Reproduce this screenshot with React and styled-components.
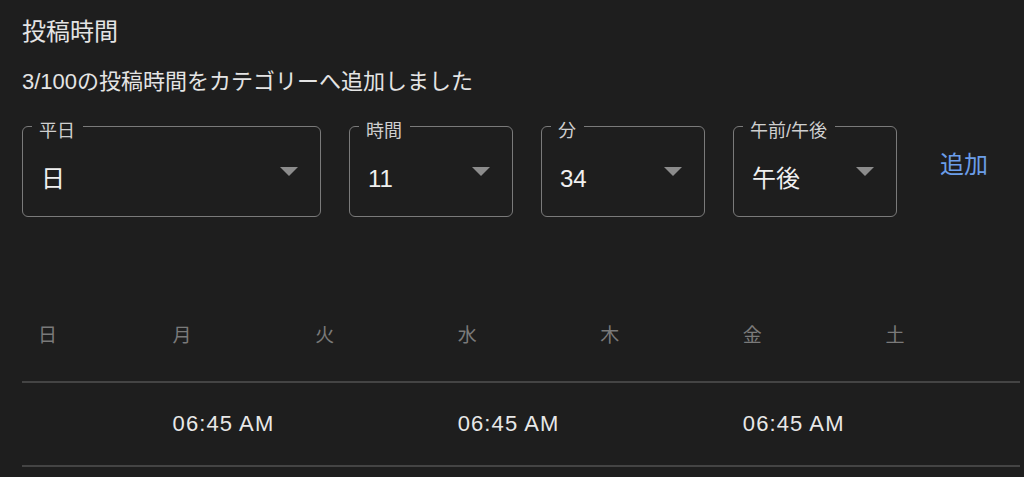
import React from "react";
import styled, { createGlobalStyle } from "styled-components";

const Global = createGlobalStyle`
  html, body {
    margin: 0;
    padding: 0;
    background: #1e1e1e;
  }
  body {
    font-family: "Liberation Sans", "Noto Sans CJK JP", sans-serif;
    color: #e6e6e6;
  }
`;

const Page = styled.div`
  padding: 14px 4px 0 22px;
  min-height: 477px;
  box-sizing: border-box;
  background: #1e1e1e;
`;

const Title = styled.h2`
  margin: 0;
  font-size: 24px;
  line-height: 36px;
  font-weight: 400;
  color: #e4e4e4;
`;

const Subtitle = styled.p`
  margin: 16px 0 0;
  font-size: 22px;
  line-height: 32px;
  font-weight: 400;
  color: #e4e4e4;
`;

const FormRow = styled.div`
  display: flex;
  align-items: flex-start;
  gap: 28px;
  margin-top: 28px;
`;

const SelectBox = styled.div`
  position: relative;
  box-sizing: border-box;
  width: ${(p) => p.$width}px;
  height: 91px;
  border: 1px solid #7a7a7a;
  border-radius: 6px;
  display: flex;
  align-items: flex-start;
  padding: 0 22px 0 18px;
`;

const Label = styled.span`
  position: absolute;
  top: -7px;
  left: 9px;
  padding: 0 8px 0 7px;
  background: #1e1e1e;
  font-size: 18px;
  line-height: 22px;
  color: #cfcfcf;
  white-space: nowrap;
`;

const Value = styled.span`
  flex: 1;
  margin-top: 34px;
  font-size: 24px;
  line-height: 36px;
  color: #f0f0f0;
`;

const Arrow = styled.svg`
  margin-top: 40px;
  flex: none;
`;

const AddButton = styled.button`
  margin: 21px 0 0 3px;
  padding: 0 12px;
  border: none;
  background: transparent;
  font-family: "Liberation Sans", "Noto Sans CJK JP", sans-serif;
  font-size: 24px;
  line-height: 36px;
  color: #6b9de8;
  cursor: pointer;
`;

const Table = styled.table`
  margin-top: 69px;
  width: 998px;
  border-collapse: collapse;
  table-layout: fixed;
`;

const HeadCell = styled.th`
  height: 96px;
  padding: 0 0 0 ${(p) => (p.$first ? 16 : 8)}px;
  text-align: left;
  vertical-align: middle;
  font-size: 19px;
  font-weight: 400;
  color: #7a7a7a;
  border-bottom: 2px solid #444444;
  box-sizing: border-box;
`;

const Cell = styled.td`
  height: 84px;
  padding: 0 0 0 ${(p) => (p.$first ? 16 : 8)}px;
  vertical-align: middle;
  font-size: 22px;
  letter-spacing: 1.1px;
  color: #e8e8e8;
  border-bottom: 2px solid #444444;
  box-sizing: border-box;
`;

const DropArrow = () => (
  <Arrow width="18" height="9" viewBox="7 10 10 5">
    <path d="M7 10l5 5 5-5z" fill="#8c8c8c" />
  </Arrow>
);

const selects = [
  { label: "平日", value: "日", width: 299 },
  { label: "時間", value: "11", width: 164 },
  { label: "分", value: "34", width: 164 },
  { label: "午前/午後", value: "午後", width: 164 },
];

const days = ["日", "月", "火", "水", "木", "金", "土"];
const times = ["", "06:45 AM", "", "06:45 AM", "", "06:45 AM", ""];

export default function App() {
  return (
    <>
      <Global />
      <Page>
        <Title>投稿時間</Title>
        <Subtitle>3/100の投稿時間をカテゴリーへ追加しました</Subtitle>
        <FormRow>
          {selects.map((s) => (
            <SelectBox key={s.label} $width={s.width}>
              <Label>{s.label}</Label>
              <Value>{s.value}</Value>
              <DropArrow />
            </SelectBox>
          ))}
          <AddButton>追加</AddButton>
        </FormRow>
        <Table>
          <thead>
            <tr>
              {days.map((d, i) => (
                <HeadCell key={d} $first={i === 0}>
                  {d}
                </HeadCell>
              ))}
            </tr>
          </thead>
          <tbody>
            <tr>
              {times.map((t, i) => (
                <Cell key={i} $first={i === 0}>
                  {t}
                </Cell>
              ))}
            </tr>
          </tbody>
        </Table>
      </Page>
    </>
  );
}
